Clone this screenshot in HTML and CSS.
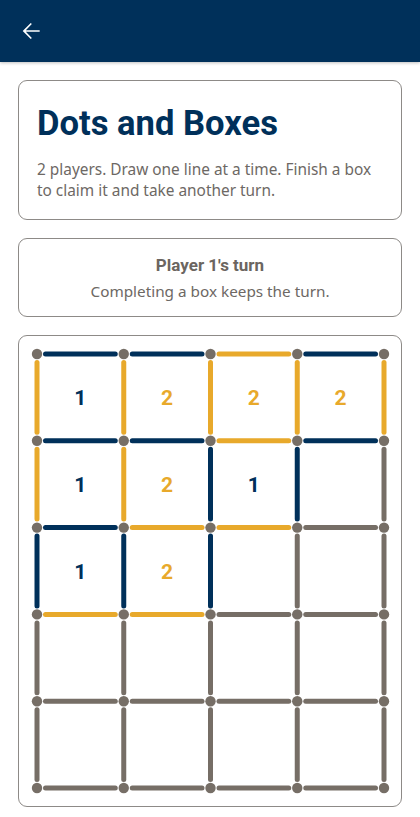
FILE: index.html
```html
<!DOCTYPE html>
<html lang="en">
<head>
    <meta charset="UTF-8">
    <meta name="viewport" content="width=device-width, initial-scale=1.0">
    <title>Dots and Boxes</title>
    <link rel="stylesheet" href="styles.css">
</head>
<body>

<header class="app-bar">
    <button class="back-button" aria-label="Back">
        <svg viewBox="0 0 24 24" width="26" height="26">
            <path d="M20 11.25H7.2l5.6-5.6L11.75 4.6 4.35 12l7.4 7.4 1.05-1.05-5.6-5.6H20v-1.5z" fill="#ffffff"/>
        </svg>
    </button>
</header>

<main class="content">
    <section class="card intro-card">
        <h1 class="title">Dots and Boxes</h1>
        <p class="description">2 players. Draw one line at a time. Finish a box to claim it and take another turn.</p>
    </section>

    <section class="card turn-card">
        <div class="turn-title" id="turn-title">Player 1's turn</div>
        <div class="turn-hint">Completing a box keeps the turn.</div>
    </section>

    <section class="card board-card">
        <svg id="board" class="board" viewBox="0 0 382 470" width="382" height="470"></svg>
    </section>
</main>

<script>
    const COLS = 4;
    const ROWS = 5;
    const STEP_X = 86.75;
    const STEP_Y = 86.8;
    const ORIGIN = 18;
    const COLORS = ['#766e66', '#00305a', '#e8a92b']; // 未使用, プレイヤー1, プレイヤー2

    // 横線 (ROWS+1 x COLS), 縦線 (ROWS x COLS+1), 0 = 未使用
    const hLines = [
        [1, 1, 2, 1],
        [1, 1, 2, 1],
        [1, 2, 2, 0],
        [2, 2, 0, 0],
        [0, 0, 0, 0],
        [0, 0, 0, 0]
    ];
    const vLines = [
        [2, 2, 2, 2, 2],
        [2, 2, 1, 1, 0],
        [1, 1, 1, 0, 0],
        [0, 0, 0, 0, 0],
        [0, 0, 0, 0, 0]
    ];
    const boxes = [
        [1, 2, 2, 2],
        [1, 2, 1, 0],
        [1, 2, 0, 0],
        [0, 0, 0, 0],
        [0, 0, 0, 0]
    ];

    const board = document.getElementById('board');
    const NS = 'http://www.w3.org/2000/svg';

    function px(c) { return ORIGIN + c * STEP_X; }
    function py(r) { return ORIGIN + r * STEP_Y; }

    function add(tag, attrs, text) {
        const el = document.createElementNS(NS, tag);
        for (const key in attrs) el.setAttribute(key, attrs[key]);
        if (text) el.textContent = text;
        board.appendChild(el);
        return el;
    }

    function drawLine(x1, y1, x2, y2, owner) {
        add('line', { x1, y1, x2, y2, stroke: COLORS[owner], 'stroke-width': 5, 'stroke-linecap': 'round' });
    }

    function drawBoard() {
        board.innerHTML = '';
        const pad = 8.5; // 点と線の間のすき間

        hLines.forEach((row, r) => {
            row.forEach((owner, c) => {
                drawLine(px(c) + pad, py(r), px(c + 1) - pad, py(r), owner);
            });
        });
        vLines.forEach((row, r) => {
            row.forEach((owner, c) => {
                drawLine(px(c), py(r) + pad, px(c), py(r + 1) - pad, owner);
            });
        });

        boxes.forEach((row, r) => {
            row.forEach((owner, c) => {
                if (!owner) return;
                add('text', {
                    x: px(c) + STEP_X / 2,
                    y: py(r) + STEP_Y / 2 + 1,
                    class: 'box-label',
                    fill: COLORS[owner]
                }, String(owner));
            });
        });

        for (let r = 0; r <= ROWS; r++) {
            for (let c = 0; c <= COLS; c++) {
                add('circle', { cx: px(c), cy: py(r), r: 5.2, fill: '#766e66' });
            }
        }
    }

    drawBoard();
</script>

</body>
</html>
```

FILE: styles.css
```css
body {
    margin: 0;
    font-family: "Noto Sans", "Open Sans", sans-serif;
    background-color: #ffffff;
    color: #6b6560;
}
.app-bar {
    height: 62px;
    background-color: #00305a;
    display: flex;
    align-items: center;
    padding: 0 18px;
    box-shadow: 0 1px 3px rgba(0, 0, 0, 0.25);
}
.back-button {
    background: none;
    border: none;
    padding: 0;
    width: 26px;
    height: 26px;
    cursor: pointer;
}
.back-button svg {
    display: block;
}
.content {
    padding: 18px 18px 9px;
    display: flex;
    flex-direction: column;
    gap: 18px;
}
.card {
    border: 1px solid #8d8a87;
    border-radius: 9px;
    background-color: #ffffff;
}
.intro-card {
    padding: 21px 18px 18px;
}
.title {
    margin: 0;
    font-family: Roboto, "Noto Sans", sans-serif;
    font-weight: 700;
    font-size: 34.6px;
    line-height: 42px;
    color: #00305a;
}
.description {
    margin: 15px 0 0;
    font-size: 15.4px;
    line-height: 21px;
    color: #6d6864;
}
.turn-card {
    padding: 15px 18px 14px;
    text-align: center;
}
.turn-title {
    font-family: Roboto, "Noto Sans", sans-serif;
    font-weight: 700;
    font-size: 17px;
    line-height: 22px;
    color: #6b6560;
}
.turn-hint {
    margin-top: 4px;
    font-size: 15.3px;
    line-height: 22px;
    color: #6d6864;
}
.board-card {
    padding: 0;
}
.board {
    display: block;
}
.box-label {
    font-family: Roboto, "Noto Sans", sans-serif;
    font-weight: 700;
    font-size: 21px;
    text-anchor: middle;
    dominant-baseline: central;
}
```
